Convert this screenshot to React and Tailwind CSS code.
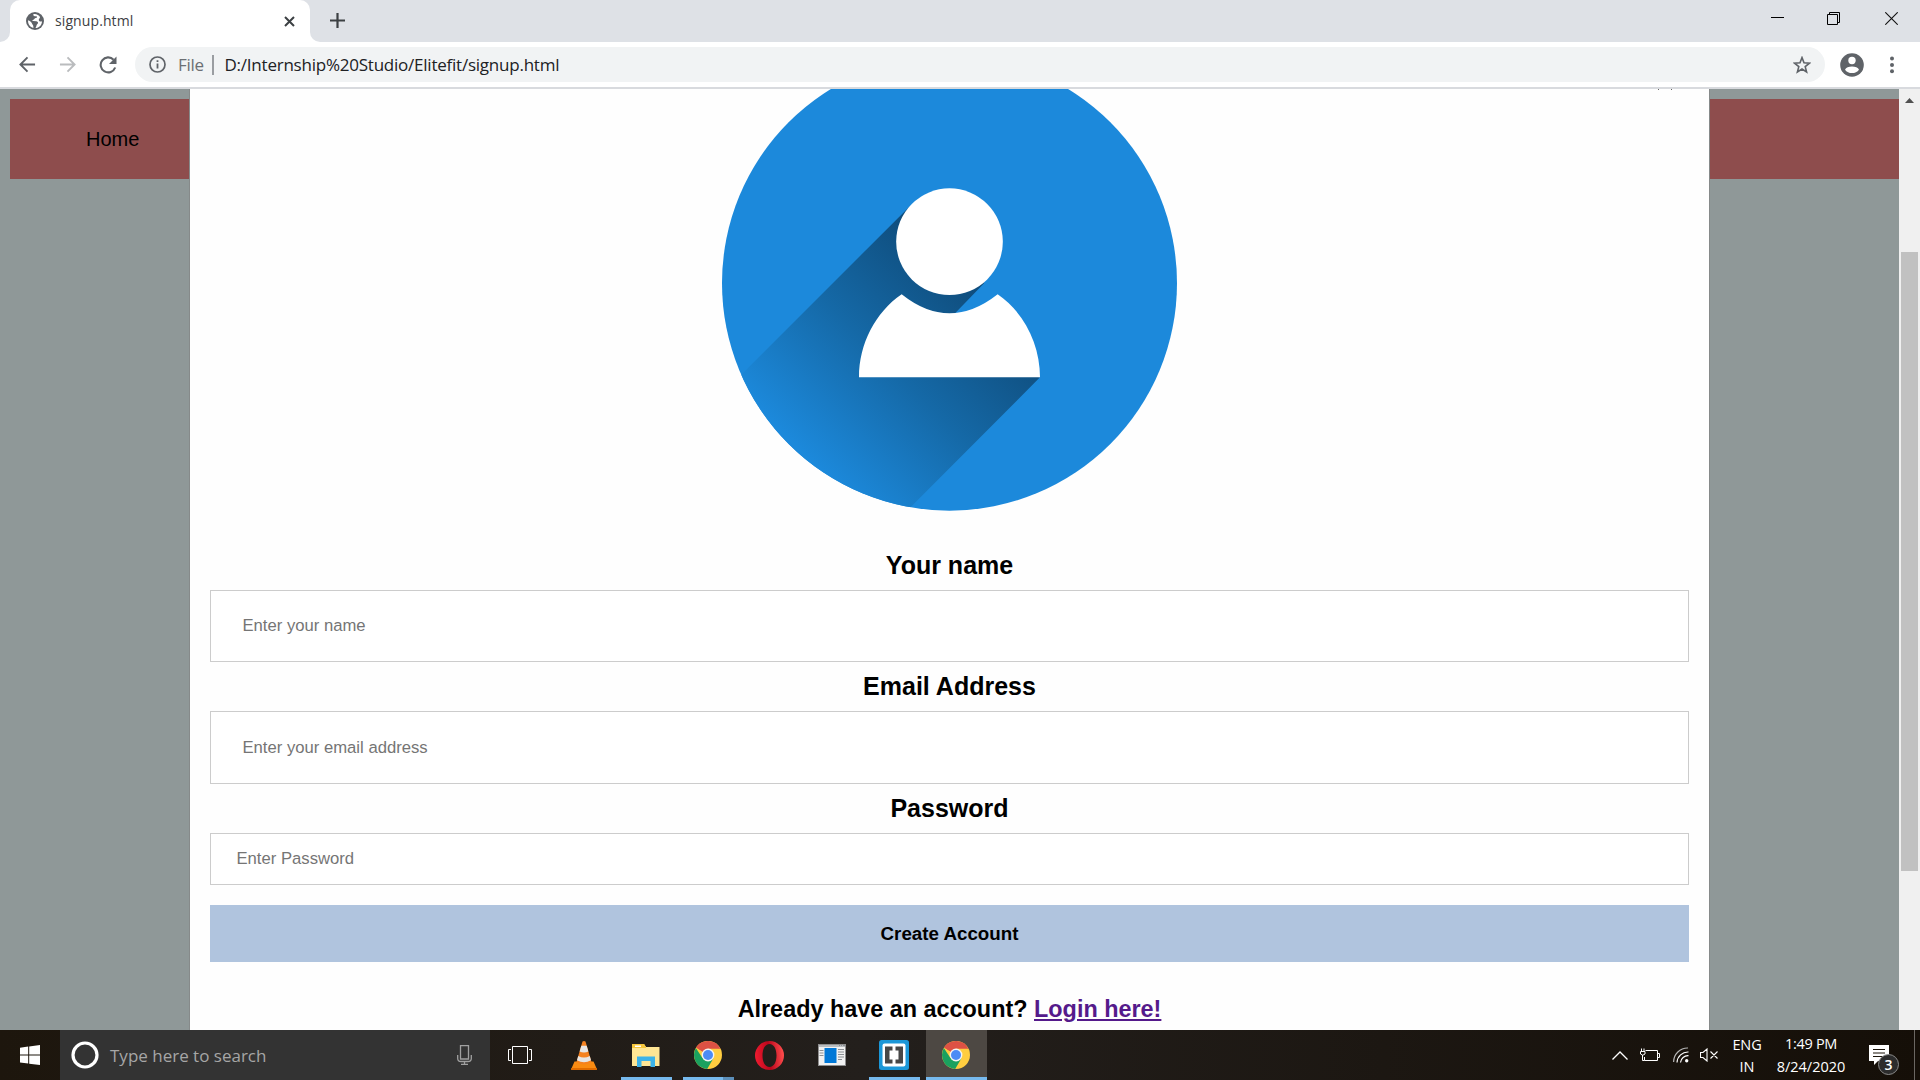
import React from "react";

const UI = "font-['Open_Sans','Noto_Sans',sans-serif]";
const ARIAL = "font-['Liberation_Sans',Arial,sans-serif]";

function GlobeIcon() {
  return (
    <svg width="18" height="18" viewBox="0 0 18 18" className="shrink-0">
      <circle cx="9" cy="9" r="9" fill="#5f6368" />
      <path d="M7.2 2.2 C7 4 8.6 4.2 10.2 4.3 C11.6 4.4 11.2 6 9.8 6.1 C8.4 6.2 8.4 7.8 7 7.9 C6 8 6.2 9 7.2 9 L10.4 9.2 C12.2 9.6 12.6 11 11.4 12 C10.3 12.8 10.6 14.6 9.4 16 C13.4 15.9 16 12.8 16 9.2 C14.6 10 13 9.4 12.8 8 C12.6 6.6 14.2 6.4 14 5 C13 3.2 10.6 1.8 8.4 2 Z M2.1 8.2 C3.6 8.8 5.6 10 6 11.6 C6.4 13 7.6 13 7.4 15.9 C4.2 15.2 1.7 12 2.1 8.2 Z" fill="#fff" />
    </svg>
  );
}

function TabStrip() {
  return (
    <div className="flex h-[42px] bg-[#dee1e6]">
      <div className="flex h-full w-[10px] items-end bg-white">
        <div className="h-full w-full rounded-br-[10px] bg-[#dee1e6]" />
      </div>
      <div className="flex h-full w-[300px] items-center rounded-t-[10px] bg-white pl-4">
        <GlobeIcon />
        <span className={`ml-[11px] text-[14px] leading-[20px] tracking-[0.1px] text-[#3c4043] ${UI}`}>signup.html</span>
        <svg width="11" height="11" viewBox="0 0 11 11" className="mr-[15px] ml-auto">
          <path d="M1 1 L10 10 M10 1 L1 10" stroke="#3c4043" strokeWidth="2" />
        </svg>
      </div>
      <div className="h-full w-[10px] bg-white">
        <div className="h-full w-full rounded-bl-[10px] bg-[#dee1e6]" />
      </div>
      <svg width="15" height="15" viewBox="0 0 15 15" className="mt-[13px] ml-[10px]">
        <path d="M7.5 0 V15 M0 7.5 H15" stroke="#3c4043" strokeWidth="2.2" />
      </svg>
      <div className="mr-[22px] ml-auto flex items-start">
        <svg width="13" height="13" viewBox="0 0 13 13" className="mt-[12px]">
          <path d="M0 5.5 H13" stroke="#000" />
        </svg>
        <svg width="13" height="13" viewBox="0 0 13 13" className="mt-[12px] ml-[43px]" fill="none">
          <path d="M0.5 2.5 H10.5 V12.5 H0.5 Z M2.5 2.5 V0.5 H12.5 V10.5 H10.5" stroke="#000" />
        </svg>
        <svg width="13" height="13" viewBox="0 0 13 13" className="mt-[12px] ml-[45px]">
          <path d="M0.3 0.3 L12.7 12.7 M12.7 0.3 L0.3 12.7" stroke="#111" strokeWidth="1.1" />
        </svg>
      </div>
    </div>
  );
}

function Toolbar() {
  return (
    <div className="flex h-[45px] items-center bg-white">
      <svg width="17" height="17" viewBox="0 0 18 18" className="ml-[19px]" fill="none" stroke="#5f6368" strokeWidth="2">
        <path d="M17 9 H2 M9 1.5 L1.5 9 L9 16.5" />
      </svg>
      <svg width="17" height="17" viewBox="0 0 18 18" className="ml-[23px]" fill="none" stroke="#babcbe" strokeWidth="2">
        <path d="M1 9 H16 M9 1.5 L16.500 9 L9 16.500" />
      </svg>
      <svg width="18" height="18" viewBox="0 0 18 18" className="ml-[23px]" fill="none">
        <path d="M14.600 3.700 A7.500 7.500 0 1 0 16.200 11.500" stroke="#5f6368" strokeWidth="2.100" />
        <path d="M17.500 0.500 V8 H10 Z" fill="#5f6368" />
      </svg>
      <div className="ml-[18px] flex h-[35px] w-[1690px] items-center rounded-full bg-[#f1f3f4]">
        <svg width="17" height="17" viewBox="0 0 17 17" className="ml-[14px]" fill="none">
          <circle cx="8.500" cy="8.500" r="7.500" stroke="#5f6368" strokeWidth="1.700" />
          <path d="M8.500 7.500 V12.600 M8.500 4.200 V6" stroke="#5f6368" strokeWidth="1.800" />
        </svg>
        <span className={`ml-[12px] w-[34px] text-[17px] leading-[20px] tracking-[-0.3px] text-[#6b6f73] ${UI}`}>File</span>
        <span className="h-5 w-[1.500px] bg-[#9a9da1]" />
        <span className={`ml-[11px] text-[17px] leading-[20px] tracking-[-0.23px] whitespace-nowrap text-[#202124] ${UI}`}>
          D:/Internship%20Studio/Elitefit/signup.html
        </span>
        <svg width="18" height="18" viewBox="0 0 18 18" className="mr-[14px] ml-auto" fill="none">
          <path d="M9 1.600 L11 6.700 L16.500 7.100 L12.200 10.600 L13.600 16 L9 13 L4.400 16 L5.800 10.600 L1.500 7.100 L7 6.700 Z" stroke="#5f6368" strokeWidth="1.600" />
        </svg>
      </div>
      <svg width="24" height="24" viewBox="0 0 24 24" className="ml-[15px]">
        <circle cx="12" cy="12" r="11.800" fill="#5f6368" />
        <circle cx="12" cy="7.500" r="3.700" fill="#fff" />
        <path d="M5 16.700 C6.500 12.400 17.500 12.400 19 16.700 C16 21.200 8 21.200 5 16.700 Z" fill="#fff" />
      </svg>
      <svg width="4" height="18" viewBox="0 0 4 18" className="ml-[26px]" fill="#5f6368">
        <circle cx="2" cy="2.500" r="2" />
        <circle cx="2" cy="9" r="2" />
        <circle cx="2" cy="15.200" r="2" />
      </svg>
    </div>
  );
}

function Avatar() {
  return (
    <svg width="456" height="422" viewBox="66 27 1368 1266" className="mx-auto block">
      <defs>
        <clipPath id="disc">
          <circle cx="748.500" cy="609.500" r="682.500" />
        </clipPath>
        <linearGradient id="cast" gradientUnits="userSpaceOnUse" x1="848" y1="622" x2="330" y2="1140">
          <stop offset="0" stopColor="#0f4c7b" />
          <stop offset="0.500" stopColor="#1569a7" />
          <stop offset="1" stopColor="#1c89db" />
        </linearGradient>
      </defs>
      <circle cx="748.500" cy="609.500" r="682.500" fill="#1c89db" />
      <path clipPath="url(#disc)" fill="url(#cast)" d="M628 380 L-265 1273 L-100 1500 L414 1500 L1020 892 L620 850 L853 609 Z" />
      <circle cx="748.500" cy="485" r="160" fill="#fff" />
      <path d="M605 643 Q748 757 893 643 C972 697 1020 792 1020 892 H477 C477 792 526 697 605 643 Z" fill="#fff" />
    </svg>
  );
}

function Field({ label, placeholder, type, box, heading }) {
  return (
    <div className={heading}>
      <label className="block text-center text-[25px] leading-[29px] font-bold text-black">{label}</label>
      <input
        type={type}
        placeholder={placeholder}
        className={`mt-[10px] block w-full border border-[#ccc] bg-white text-[16.67px] placeholder:text-[#757575] ${box}`}
      />
    </div>
  );
}

function Page() {
  return (
    <div className={`flex h-[941px] overflow-hidden bg-[#8f9898] ${ARIAL}`}>
      <div className="w-[189px] shrink-0 pt-[10px] pl-[10px]">
        <nav className="flex h-20 items-center bg-[#8e4d4d] pl-[76px] text-[20px] text-black">Home</nav>
      </div>
      <main className="relative h-full w-[1521px] shrink-0 border-x border-[#868a8a] bg-[#fefefe]">
        <div className="absolute top-0 right-[37px] flex w-[14px] justify-between">
          <i className="h-px w-px bg-[#666]" />
          <i className="h-px w-px bg-[#666]" />
        </div>
        <Avatar />
        <form className="px-5">
          <Field label="Your name" placeholder="Enter your name" type="text" heading="pt-[40px]" box="h-[72px] px-[31.5px]" />
          <Field label="Email Address" placeholder="Enter your email address" type="text" heading="pt-[10px]" box="h-[73px] px-[31.5px]" />
          <Field label="Password" placeholder="Enter Password" type="password" heading="pt-[10px]" box="h-[52px] px-[25.5px]" />
          <button type="button" className="mt-5 block h-[57px] w-full bg-[#b0c4de] pt-[2px] text-[18.75px] font-bold text-black">
            Create Account
          </button>
          <p className="mt-[34px] text-center text-[23.4px] leading-[27px] font-bold text-black">
            Already have an account? <a className="text-[#551a8b] underline">Login here!</a>
          </p>
        </form>
      </main>
      <div className="flex-1 pt-[10px]">
        <div className="h-20 bg-[#8e4d4d]" />
      </div>
      <div className="flex w-[21px] shrink-0 flex-col items-center bg-[#f0f0f0]">
        <svg width="9" height="5" viewBox="0 0 9 5" className="mt-[9px]">
          <path d="M4.500 0 L9 5 H0 Z" fill="#505050" />
        </svg>
        <div className="mt-[149px] h-[619px] w-[17px] bg-[#c1c1c1]" />
      </div>
    </div>
  );
}

function ChromeLogo() {
  return (
    <svg width="28" height="28" viewBox="0 0 28 28">
      <circle cx="14" cy="14" r="14" fill="#ffcd40" />
      <path d="M14 14 L2.200 6.500 A14 14 0 0 1 26.500 7.700 L14 7.700 Z" fill="#dd5144" />
      <path d="M1.900 7 A14 14 0 0 0 13.200 28 L19.300 17.600 L14 14 L8.400 17 Z" fill="#1aa15f" />
      <path d="M14 14 L2.200 6.500 A14 14 0 0 1 4.800 3.500 L10 12 Z" fill="#dd5144" />
      <circle cx="14" cy="14" r="6.400" fill="#f4f4f4" />
      <circle cx="14" cy="14" r="5" fill="#4c8bf5" />
    </svg>
  );
}

function VlcLogo() {
  return (
    <svg width="26" height="29" viewBox="0 0 26 29">
      <path d="M3.500 20.500 H22.500 L26 28.500 H0 Z" fill="#f98b12" />
      <path d="M0.300 27 H25.700 L26 29 H0 Z" fill="#e06b00" />
      <path d="M11.500 0.500 Q13 -0.500 14.500 0.500 L20.500 21 Q13 25.500 5.500 21 Z" fill="#f58220" />
      <path d="M10.300 4.800 H15.700 L17.400 10.500 Q13 12.500 8.600 10.500 Z M7.200 15 Q13 18 18.800 15 L20 19.300 Q13 23 6 19.300 Z" fill="#e6e6e6" />
    </svg>
  );
}

function ExplorerLogo() {
  return (
    <svg width="28" height="23" viewBox="0 0 28 23">
      <path d="M0 0 H12 L14 3 H27.500 V22 H0 Z" fill="#ffe694" />
      <path d="M0 0 H12 L14 3 V4 H0 Z" fill="#f5c63c" />
      <path d="M3 1.500 H9 V3 H3 Z" fill="#fff" />
      <path d="M5 23 V12.500 H23 V23 H18.500 V17 H9.500 V23 Z" fill="#3db3e8" />
    </svg>
  );
}

function OperaLogo() {
  return (
    <svg width="29" height="29" viewBox="0 0 29 29">
      <defs>
        <linearGradient id="opera" x1="0" x2="1" y1="0.600" y2="0.500">
          <stop offset="0" stopColor="#f01c30" />
          <stop offset="0.500" stopColor="#b9061b" />
          <stop offset="1" stopColor="#ff4d4d" />
        </linearGradient>
      </defs>
      <path fillRule="evenodd" fill="url(#opera)" d="M14.500 0 A14.500 14.500 0 1 0 14.500 29 A14.500 14.500 0 1 0 14.500 0 Z M14.500 3 C19 3 21.500 8 21.500 14.500 C21.500 21 19 26 14.500 26 C10 26 7.500 21 7.500 14.500 C7.500 8 10 3 14.500 3 Z" />
    </svg>
  );
}

function WindowLogo() {
  return (
    <svg width="28" height="22" viewBox="0 0 28 22">
      <rect width="28" height="22" fill="#f1f1f1" />
      <rect width="28" height="3" fill="#b9bcbf" />
      <rect x="6.500" y="4" width="12" height="15" fill="#0078d7" />
      <path d="M1.500 6.500 H5.500 M1.500 9 H5.500 M1.500 11.500 H5.500 M20 5.500 H26 M20 8 H26 M20 10.500 H26 M20 13 H26 M20 15.500 H24 M21 1.500 H22 M23 1.500 H24 M25 1.500 H27" stroke="#8b8f93" />
      <rect x="0.500" y="0.500" width="27" height="21" fill="none" stroke="#8e8e8e" />
    </svg>
  );
}

function BracketsLogo() {
  return (
    <svg width="30" height="30" viewBox="0 0 30 30">
      <rect width="30" height="30" rx="2.500" fill="#1b97d8" />
      <rect x="3.500" y="3.500" width="23" height="23" rx="2" fill="#fff" />
      <path d="M6 6.500 H13.500 V10.500 H10.500 V19.500 H13.500 V23.500 H6 Z M24 6.500 H16.500 V10.500 H19.500 V19.500 H16.500 V23.500 H24 Z" fill="#474747" />
    </svg>
  );
}

function TaskButton({ children, bar, active }) {
  return (
    <div className={`flex h-full w-[61px] flex-col items-center ${active ? "bg-[#4d4843]" : ""}`}>
      <div className="flex h-[47px] w-full items-center justify-center pt-[3px] pr-[2px]">{children}</div>
      {bar}
    </div>
  );
}

function Taskbar() {
  const line = <div className="h-[3px] w-[51px] bg-[#76b9ed]" />;
  return (
    <div className={`flex h-[50px] items-center bg-linear-to-r from-[#1d160d] via-[#231f1c] via-45% to-[#150f08] ${UI}`}>
      <div className="flex w-[60px] justify-center">
        <svg width="20" height="20" viewBox="0 0 20 20" fill="#fff">
          <path d="M0 2.700 L8.200 1.500 V9.500 H0 Z M9.200 1.400 L20 0 V9.500 H9.200 Z M0 10.500 H8.200 V18.600 L0 17.400 Z M9.200 10.500 H20 V20 L9.200 18.700 Z" />
        </svg>
      </div>
      <div className="flex h-full w-[430px] items-center bg-[#333]">
        <svg width="28" height="28" viewBox="0 0 28 28" className="ml-[11px]">
          <circle cx="14" cy="14" r="12" fill="none" stroke="#fff" strokeWidth="3.200" />
        </svg>
        <span className="ml-[11px] pt-[2px] text-[17px] leading-[24px] whitespace-nowrap text-[#a6a6a6]">Type here to search</span>
        <svg width="15" height="20" viewBox="0 0 15 20" className="mr-[18px] ml-auto" fill="none" stroke="#a0a0a0">
          <path d="M3.500 0.700 H11.500 V14 H3.500 Z M0.700 10 V13.500 Q0.700 16.500 4 16.500 H11 Q14.300 16.500 14.300 13.500 V10 M7.500 16.500 V19.300 M4 19.300 H11" strokeWidth="1.300" />
        </svg>
      </div>
      <div className="flex w-[64px] pl-[18px]">
        <svg width="24" height="18" viewBox="0 0 24 18" fill="none" stroke="#fff">
          <path d="M4.500 0.500 H19.500 V17.500 H4.500 Z M3 3.500 H0.500 V14.500 H3 M21 3.500 H23.500 V14.500 H21" />
        </svg>
      </div>
      <div className="flex h-full gap-px">
        <TaskButton><VlcLogo /></TaskButton>
        <TaskButton bar={line}><ExplorerLogo /></TaskButton>
        <TaskButton bar={<div className="flex h-[3px] w-[51px] bg-[#5c8fb9]"><div className="h-full w-10 bg-[#76b9ed]" /></div>}><ChromeLogo /></TaskButton>
        <TaskButton><OperaLogo /></TaskButton>
        <TaskButton><WindowLogo /></TaskButton>
        <TaskButton bar={line}><BracketsLogo /></TaskButton>
        <TaskButton active bar={<div className="h-[3px] w-full bg-[#76b9ed]" />}><ChromeLogo /></TaskButton>
      </div>
      <div className="ml-auto flex h-full items-center text-white">
        <svg width="16" height="9" viewBox="0 0 16 9" fill="none" stroke="#fff" strokeWidth="1.300">
          <path d="M0.500 8.500 L8 1 L15.500 8.500" />
        </svg>
        <svg width="20" height="14" viewBox="0 0 20 14" className="ml-[12px]" fill="none" stroke="#fff">
          <path d="M5.500 2.500 H17.500 V12.500 H4.500 V9 M18 5.500 H19.500 V9.500 H18 M0.500 3.500 H5 V6 Q2.750 8.500 0.500 6 Z M1.500 0.500 V3 M4 0.500 V3 M2.500 7 V12.500 H4.500" />
        </svg>
        <svg width="16" height="16" viewBox="0 0 16 16" className="ml-[13px]" fill="none" stroke="#fff" strokeWidth="1.200">
          <path d="M0.600 15 A14 14 0 0 1 15 1" stroke="#b5b5b5" />
          <path d="M4 15.500 A11 11 0 0 1 15.500 5 M7.500 15.500 A7.500 7.500 0 0 1 15.500 8.700" />
          <circle cx="13.700" cy="13.800" r="1.700" fill="#fff" stroke="none" />
        </svg>
        <svg width="18" height="14" viewBox="0 0 18 14" className="ml-[11px]" fill="none" stroke="#fff" strokeWidth="1.100">
          <path d="M0.500 4.500 H3 L7 1 V13 L3 9.500 H0.500 Z M10.500 3.500 L17.500 10.500 M17.500 3.500 L10.500 10.500" />
        </svg>
        <div className="ml-[9px] flex w-[41px] flex-col items-center pt-px pr-px text-[14.5px] leading-[22px] tracking-[-0.1px]">
          <span>ENG</span>
          <span>IN</span>
        </div>
        <div className="ml-[3px] flex w-[81px] flex-col items-center pr-px text-[14.5px] leading-[23px] whitespace-nowrap">
          <span className="tracking-[-0.3px]">1:49 PM</span>
          <span>8/24/2020</span>
        </div>
        <div className="relative ml-[17px] h-full w-[30px]">
          <svg width="20" height="20" viewBox="0 0 20 20" className="mt-[15px]">
            <path d="M0 0 H20 V16 H9 L5 20 V16 H0 Z" fill="#fff" />
            <path d="M4 4.500 H16 M4 8 H16 M4 11.500 H16" stroke="#1a1309" />
          </svg>
          <span className="absolute top-[24px] left-[9px] flex h-[21px] w-[21px] items-center justify-center rounded-full border border-[#8a8a8a] bg-[#2c2c2c] text-[14px] leading-none font-semibold">
            3
          </span>
        </div>
        <div className="mr-[5px] ml-[15px] h-full w-px bg-[#6b6762]" />
      </div>
    </div>
  );
}

export default function App() {
  return (
    <div className="flex h-[1080px] w-[1920px] flex-col overflow-hidden">
      <TabStrip />
      <Toolbar />
      <div className="h-[2px] bg-[#d8dade]" />
      <Page />
      <Taskbar />
    </div>
  );
}
